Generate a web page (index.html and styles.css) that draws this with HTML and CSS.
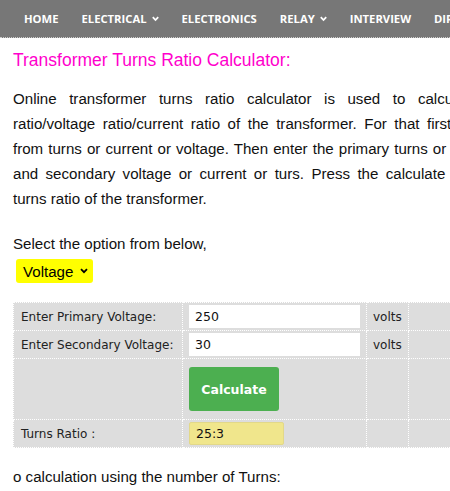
FILE: index.html
```html
<!DOCTYPE html>
<html>
<head>
<meta charset="utf-8">
<link rel="stylesheet" href="styles.css">
</head>
<body>
<nav class="nav">
  <span class="nav-item">HOME</span>
  <span class="nav-item">ELECTRICAL <svg class="chev" width="7" height="6" viewBox="0 0 7 6"><path d="M0.8 1.2 L3.5 4 L6.2 1.2" fill="none" stroke="#fff" stroke-width="1.8"/></svg></span>
  <span class="nav-item">ELECTRONICS</span>
  <span class="nav-item">RELAY <svg class="chev" width="7" height="6" viewBox="0 0 7 6"><path d="M0.8 1.2 L3.5 4 L6.2 1.2" fill="none" stroke="#fff" stroke-width="1.8"/></svg></span>
  <span class="nav-item">INTERVIEW</span>
  <span class="nav-item">DIRECTORY</span>
</nav>
<main class="content">
  <h1 class="title">Transformer Turns Ratio Calculator:</h1>
  <p class="intro">
    <span class="line l1">Online transformer turns ratio calculator is used to calculate the turns</span>
    <span class="line l2">ratio/voltage ratio/current ratio of the transformer. For that first select the option</span>
    <span class="line l3">from turns or current or voltage. Then enter the primary turns or voltage or current</span>
    <span class="line l4">and secondary voltage or current or turs. Press the calculate button to get the</span>
    <span class="line l5">turns ratio of the transformer.</span>
  </p>
  <p class="select-label">Select the option from below,</p>
  <div class="select"><span>Voltage</span><svg width="8" height="6" viewBox="0 0 8 6"><path d="M1 1.2 L4 4.2 L7 1.2" fill="none" stroke="#000" stroke-width="1.8"/></svg></div>
  <table class="calc">
    <tr class="row-in">
      <td class="c1">Enter Primary Voltage:</td>
      <td class="c2"><div class="field">250</div></td>
      <td class="c3">volts</td>
      <td class="c4"></td>
    </tr>
    <tr class="row-in">
      <td class="c1">Enter Secondary Voltage:</td>
      <td class="c2"><div class="field">30</div></td>
      <td class="c3">volts</td>
      <td class="c4"></td>
    </tr>
    <tr class="row-btn">
      <td class="c1"></td>
      <td class="c2"><div class="btn">Calculate</div></td>
      <td class="c3"></td>
      <td class="c4"></td>
    </tr>
    <tr class="row-in">
      <td class="c1">Turns Ratio :</td>
      <td class="c2"><div class="result">25:3</div></td>
      <td class="c3"></td>
      <td class="c4"></td>
    </tr>
  </table>
  <p class="sub">o calculation using the number of Turns:</p>
</main>
</body>
</html>
```

FILE: styles.css
```css
html, body {
  margin: 0;
  padding: 0;
  overflow: hidden;
  background: #fff;
}
body {
  font-family: "Liberation Sans", Arial, sans-serif;
  color: #111;
  width: 450px;
}
.nav {
  display: flex;
  align-items: center;
  gap: 23px;
  height: 37px;
  padding-left: 24px;
  background: #777;
  border-bottom: 1px dotted #ccc;
  white-space: nowrap;
  width: 700px;
}
.nav-item {
  font-family: "Open Sans", sans-serif;
  font-weight: 700;
  font-size: 11.25px;
  color: #fff;
  display: flex;
  align-items: center;
  gap: 5px;
}
.content {
  padding-left: 13px;
  width: 560px;
}
.title {
  font-size: 17.5px;
  font-weight: normal;
  color: #f0c;
  margin: 12px 0 15px;
  line-height: normal;
}
.intro {
  font-size: 15.1px;
  line-height: 25px;
  margin: 0;
}
.line {
  display: block;
  white-space: nowrap;
}
.l1 { word-spacing: 8.35px; }
.l2 { word-spacing: 3.3px; }
.l3 { word-spacing: 0.9px; }
.l4 { word-spacing: 3.2px; }
.select-label {
  font-size: 15.1px;
  line-height: 25px;
  margin: 20px 0 0;
}
.select {
  margin: 3px 0 0 3px;
  width: 77px;
  height: 24px;
  box-sizing: border-box;
  background: #ff0;
  border-radius: 3px;
  display: flex;
  align-items: center;
  justify-content: space-between;
  padding: 0 5px 0 7px;
  font-size: 15.1px;
  color: #000;
}
.calc {
  margin-top: 19px;
  border-collapse: collapse;
  background: #ddd;
  font-family: "DejaVu Sans", Verdana, sans-serif;
  font-size: 12px;
  color: #222;
  table-layout: fixed;
  width: 460px;
}
.calc td {
  border: 1px dotted #fff;
  padding: 2px 6px;
  vertical-align: middle;
  white-space: nowrap;
}
.c1 { width: 155px; padding-left: 7px !important; }
.c2 { width: 171px; }
.c3 { width: 29px; }
.c4 { width: 60px; }
.row-in td { height: 23px; }
.field {
  width: 171px;
  height: 23px;
  box-sizing: border-box;
  background: #fff;
  padding: 0 6px;
  line-height: 23px;
  font-size: 12.5px;
  color: #111;
}
.row-btn td { height: 60px; padding-top: 0; padding-bottom: 0; }
.btn {
  width: 90px;
  height: 44px;
  background: #4caf50;
  border-radius: 3px;
  color: #fff;
  font-weight: 700;
  font-size: 12.5px;
  display: flex;
  align-items: center;
  justify-content: center;
}
.result {
  width: 95px;
  height: 23px;
  box-sizing: border-box;
  background: #f0e68c;
  border: 1px solid #e2d889;
  border-radius: 2px;
  padding: 0 6px;
  line-height: 21px;
  font-size: 12.5px;
  color: #111;
}
.sub {
  font-size: 15.1px;
  line-height: 25px;
  margin: 16px 0 0;
}
```
